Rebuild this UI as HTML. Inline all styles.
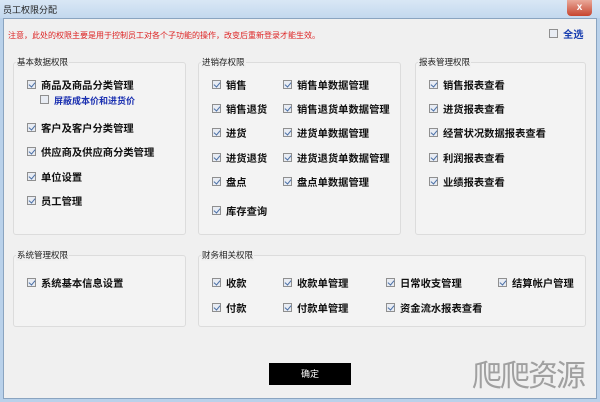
<!DOCTYPE html>
<html><head><meta charset="utf-8"><style>
*{margin:0;padding:0;box-sizing:border-box}
body{width:600px;height:402px;overflow:hidden;background:#b9d1ea;font-family:"Liberation Sans","Noto Sans CJK SC",sans-serif;position:relative}
.title{position:absolute;left:0;top:0;width:600px;height:18px;background:linear-gradient(#d9e7f5,#c3d8ee);font-size:9px;color:#222;padding:3px 0 0 3px}
.close{position:absolute;left:567px;top:0;width:25px;height:16px;background:linear-gradient(#e9a99a,#c7452f);border-radius:0 0 4px 4px;color:#fff;font-size:10px;text-align:center;line-height:15px;font-weight:bold}
.client{position:absolute;left:3px;top:18px;width:594px;height:381px;background:#f0f0f0;border:1px solid #8aa4c0}
.note{position:absolute;left:8px;top:30px;font-size:8px;color:#d22;}
.box{position:absolute;border:1px solid #dcdcdc;border-radius:3px;background:#f3f3f3}
.lg{position:absolute;font-size:8.5px;color:#222;background:#f0f0f0;padding:0 1px}
.it{position:absolute;font-size:10.3px;font-weight:bold;color:#111;white-space:nowrap;line-height:13px}
.it i{display:inline-block;width:9px;height:9px;border:1px solid #8f8f8f;background:#e8ecf3;margin-right:5px;vertical-align:0px;position:relative}
.it i:after{content:"";position:absolute;left:2px;top:0px;width:3px;height:5px;border:solid #4a6fa5;border-width:0 1px 1px 0;transform:rotate(40deg)}
.it i.u:after{display:none}
.btn{position:absolute;left:269px;top:363px;width:82px;height:22px;background:#000;color:#fff;font-size:9px;text-align:center;line-height:22px}
.wm{position:absolute;left:472px;top:359px;font-size:30px;color:#a0a0a0;letter-spacing:-2px;line-height:36px}
</style></head><body>
<div class="title">员工权限分配</div>
<div class="close">x</div>
<div class="client"></div>
<div class="note">注意，此处的权限主要是用于控制员工对各个子功能的操作，改变后重新登录才能生效。</div>
<div class="it" style="left:549px;top:29px;color:#1a3fb0"><i class="u"></i>全选</div>

<div class="box" style="left:13px;top:62px;width:173px;height:173px"></div>
<div class="lg" style="left:16px;top:56px">基本数据权限</div>
<div class="box" style="left:198px;top:62px;width:203px;height:173px"></div>
<div class="lg" style="left:201px;top:56px">进销存权限</div>
<div class="box" style="left:415px;top:62px;width:171px;height:173px"></div>
<div class="lg" style="left:418px;top:56px">报表管理权限</div>
<div class="box" style="left:13px;top:255px;width:173px;height:72px"></div>
<div class="lg" style="left:16px;top:249px">系统管理权限</div>
<div class="box" style="left:198px;top:255px;width:388px;height:72px"></div>
<div class="lg" style="left:201px;top:249px">财务相关权限</div>

<div class="it" style="left:27px;top:80px"><i></i>商品及商品分类管理</div>
<div class="it" style="left:40px;top:95px;font-size:9px;color:#1a2fb0"><i class="u"></i>屏蔽成本价和进货价</div>
<div class="it" style="left:27px;top:123px"><i></i>客户及客户分类管理</div>
<div class="it" style="left:27px;top:147px"><i></i>供应商及供应商分类管理</div>
<div class="it" style="left:27px;top:172px"><i></i>单位设置</div>
<div class="it" style="left:27px;top:196px"><i></i>员工管理</div>

<div class="it" style="left:212px;top:80px"><i></i>销售</div>
<div class="it" style="left:212px;top:104px"><i></i>销售退货</div>
<div class="it" style="left:212px;top:128px"><i></i>进货</div>
<div class="it" style="left:212px;top:153px"><i></i>进货退货</div>
<div class="it" style="left:212px;top:177px"><i></i>盘点</div>
<div class="it" style="left:212px;top:206px"><i></i>库存查询</div>
<div class="it" style="left:283px;top:80px"><i></i>销售单数据管理</div>
<div class="it" style="left:283px;top:104px"><i></i>销售退货单数据管理</div>
<div class="it" style="left:283px;top:128px"><i></i>进货单数据管理</div>
<div class="it" style="left:283px;top:153px"><i></i>进货退货单数据管理</div>
<div class="it" style="left:283px;top:177px"><i></i>盘点单数据管理</div>

<div class="it" style="left:429px;top:80px"><i></i>销售报表查看</div>
<div class="it" style="left:429px;top:104px"><i></i>进货报表查看</div>
<div class="it" style="left:429px;top:128px"><i></i>经营状况数据报表查看</div>
<div class="it" style="left:429px;top:153px"><i></i>利润报表查看</div>
<div class="it" style="left:429px;top:177px"><i></i>业绩报表查看</div>

<div class="it" style="left:27px;top:278px"><i></i>系统基本信息设置</div>

<div class="it" style="left:212px;top:278px"><i></i>收款</div>
<div class="it" style="left:212px;top:303px"><i></i>付款</div>
<div class="it" style="left:283px;top:278px"><i></i>收款单管理</div>
<div class="it" style="left:283px;top:303px"><i></i>付款单管理</div>
<div class="it" style="left:386px;top:278px"><i></i>日常收支管理</div>
<div class="it" style="left:386px;top:303px"><i></i>资金流水报表查看</div>
<div class="it" style="left:498px;top:278px"><i></i>结算帐户管理</div>

<div class="btn">确定</div>
<div class="wm">爬爬资源</div>
</body></html>
